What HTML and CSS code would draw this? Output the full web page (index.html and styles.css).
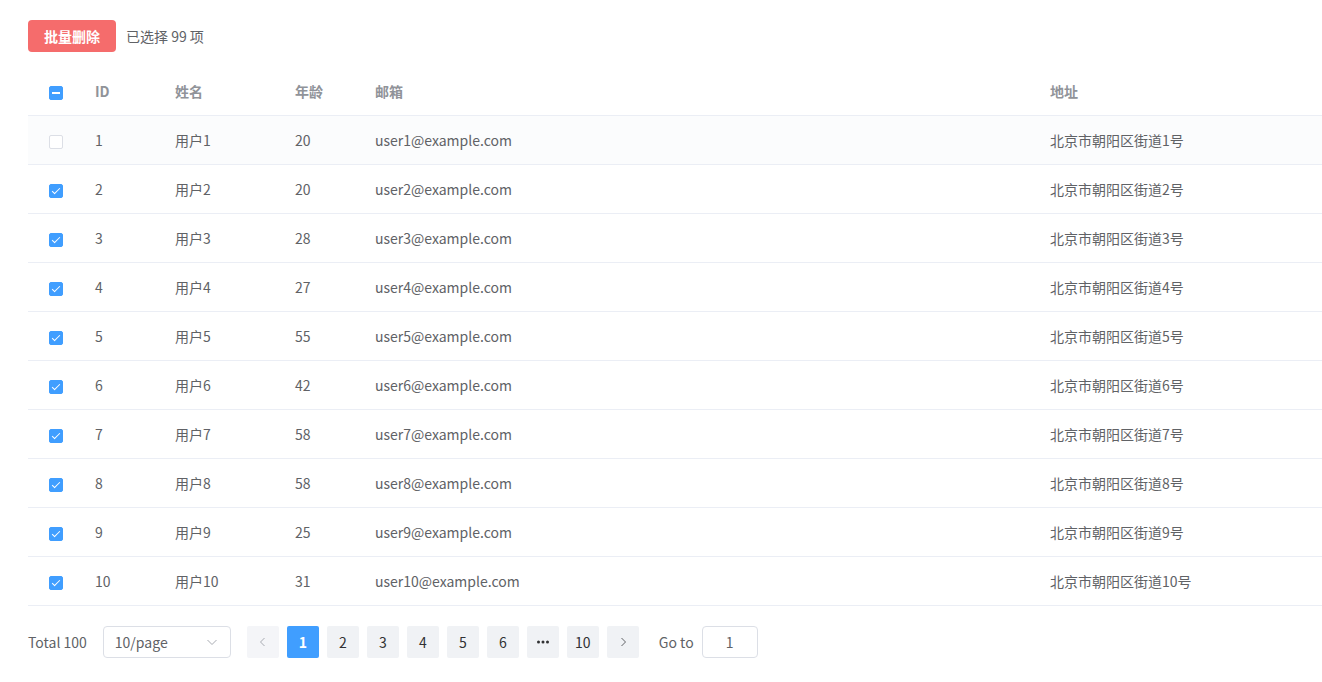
FILE: index.html
```html
<!DOCTYPE html>
<html lang="zh-CN">
<head>
    <meta charset="UTF-8">
    <meta name="viewport" content="width=device-width, initial-scale=1.0">
    <title>用户列表</title>
    <link rel="stylesheet" href="styles.css">
</head>
<body>

<div class="page">
    <div class="toolbar">
        <button class="btn-danger">批量删除</button>
        <span class="selected-info">已选择 99 项</span>
    </div>

    <table class="user-table">
        <colgroup>
            <col class="col-check">
            <col class="col-id">
            <col class="col-name">
            <col class="col-age">
            <col class="col-email">
            <col class="col-addr">
        </colgroup>
        <thead>
        <tr>
            <th class="cell-check"><span class="checkbox indeterminate"></span></th>
            <th>ID</th>
            <th>姓名</th>
            <th>年龄</th>
            <th>邮箱</th>
            <th>地址</th>
        </tr>
        </thead>
        <tbody>
        <tr class="hover">
            <td class="cell-check"><span class="checkbox"></span></td>
            <td>1</td><td>用户1</td><td>20</td><td>user1@example.com</td><td>北京市朝阳区街道1号</td>
        </tr>
        <tr>
            <td class="cell-check"><span class="checkbox checked"></span></td>
            <td>2</td><td>用户2</td><td>20</td><td>user2@example.com</td><td>北京市朝阳区街道2号</td>
        </tr>
        <tr>
            <td class="cell-check"><span class="checkbox checked"></span></td>
            <td>3</td><td>用户3</td><td>28</td><td>user3@example.com</td><td>北京市朝阳区街道3号</td>
        </tr>
        <tr>
            <td class="cell-check"><span class="checkbox checked"></span></td>
            <td>4</td><td>用户4</td><td>27</td><td>user4@example.com</td><td>北京市朝阳区街道4号</td>
        </tr>
        <tr>
            <td class="cell-check"><span class="checkbox checked"></span></td>
            <td>5</td><td>用户5</td><td>55</td><td>user5@example.com</td><td>北京市朝阳区街道5号</td>
        </tr>
        <tr>
            <td class="cell-check"><span class="checkbox checked"></span></td>
            <td>6</td><td>用户6</td><td>42</td><td>user6@example.com</td><td>北京市朝阳区街道6号</td>
        </tr>
        <tr>
            <td class="cell-check"><span class="checkbox checked"></span></td>
            <td>7</td><td>用户7</td><td>58</td><td>user7@example.com</td><td>北京市朝阳区街道7号</td>
        </tr>
        <tr>
            <td class="cell-check"><span class="checkbox checked"></span></td>
            <td>8</td><td>用户8</td><td>58</td><td>user8@example.com</td><td>北京市朝阳区街道8号</td>
        </tr>
        <tr>
            <td class="cell-check"><span class="checkbox checked"></span></td>
            <td>9</td><td>用户9</td><td>25</td><td>user9@example.com</td><td>北京市朝阳区街道9号</td>
        </tr>
        <tr>
            <td class="cell-check"><span class="checkbox checked"></span></td>
            <td>10</td><td>用户10</td><td>31</td><td>user10@example.com</td><td>北京市朝阳区街道10号</td>
        </tr>
        </tbody>
    </table>

    <div class="pagination">
        <span class="total">Total 100</span>
        <div class="size-select">
            <span>10/page</span>
            <svg class="chevron" width="14" height="14" viewBox="0 0 14 14">
                <path d="M2.5 5l4.5 4.5 4.5-4.5" fill="none" stroke="#a8abb2" stroke-width="1"/>
            </svg>
        </div>
        <div class="pager">
            <button class="page-btn disabled">
                <svg width="14" height="14" viewBox="0 0 14 14">
                    <path d="M8.5 3L4.5 7l4 4" fill="none" stroke="#a8abb2" stroke-width="1"/>
                </svg>
            </button>
            <button class="page-btn active">1</button>
            <button class="page-btn">2</button>
            <button class="page-btn">3</button>
            <button class="page-btn">4</button>
            <button class="page-btn">5</button>
            <button class="page-btn">6</button>
            <button class="page-btn more">
                <svg width="14" height="4" viewBox="0 0 14 4">
                    <circle cx="2.5" cy="2" r="1.5" fill="#303133"/>
                    <circle cx="7" cy="2" r="1.5" fill="#303133"/>
                    <circle cx="11.5" cy="2" r="1.5" fill="#303133"/>
                </svg>
            </button>
            <button class="page-btn">10</button>
            <button class="page-btn">
                <svg width="14" height="14" viewBox="0 0 14 14">
                    <path d="M5.5 3l4 4-4 4" fill="none" stroke="#606266" stroke-width="1"/>
                </svg>
            </button>
        </div>
        <span class="goto">Go to</span>
        <div class="goto-input">1</div>
    </div>
</div>

</body>
</html>
```

FILE: styles.css
```css
body {
    margin: 0;
    background: #ffffff;
    font-family: "Noto Sans CJK SC", "Noto Sans", sans-serif;
    font-size: 14px;
    color: #606266;
}

.page {
    padding: 20px 0 0 28px;
}

.toolbar {
    display: flex;
    align-items: center;
    height: 32px;
    margin-bottom: 15px;
}

.btn-danger {
    height: 32px;
    padding: 0 16px;
    border: none;
    border-radius: 4px;
    background: #f56c6c;
    color: #ffffff;
    font-family: inherit;
    font-size: 14px;
    font-weight: bold;
    cursor: pointer;
}

.selected-info {
    margin-left: 10px;
    color: #606266;
}

.user-table {
    width: 100%;
    border-collapse: collapse;
    table-layout: fixed;
}

.col-check { width: 55px; }
.col-id { width: 80px; }
.col-name { width: 120px; }
.col-age { width: 80px; }
.col-email { width: 675px; }

.user-table th,
.user-table td {
    height: 48px;
    padding: 0 12px;
    text-align: left;
    border-bottom: 1px solid #ebeef5;
    line-height: 23px;
    white-space: nowrap;
}

.user-table th {
    color: #909399;
    font-weight: bold;
}

.user-table td {
    color: #606266;
}

.user-table tr.hover td {
    background: #fbfcfd;
}

.user-table .cell-check {
    padding: 0;
    text-align: center;
}

.checkbox {
    display: inline-block;
    box-sizing: border-box;
    width: 14px;
    height: 14px;
    border: 1px solid #dcdfe6;
    border-radius: 2px;
    background: #ffffff;
    vertical-align: middle;
    position: relative;
}

.checkbox.checked,
.checkbox.indeterminate {
    background: #409eff;
    border-color: #409eff;
}

.checkbox.checked::after {
    content: "";
    position: absolute;
    left: 4px;
    top: 1px;
    width: 3px;
    height: 7px;
    border: 1px solid #ffffff;
    border-left: 0;
    border-top: 0;
    transform: rotate(45deg);
}

.checkbox.indeterminate::after {
    content: "";
    position: absolute;
    left: 2px;
    right: 2px;
    top: 5px;
    height: 2px;
    background: #ffffff;
}

.pagination {
    display: flex;
    align-items: center;
    height: 32px;
    margin-top: 20px;
}

.total {
    margin-right: 16px;
}

.size-select {
    box-sizing: border-box;
    width: 128px;
    height: 32px;
    padding: 0 11px;
    border: 1px solid #dcdfe6;
    border-radius: 4px;
    display: flex;
    align-items: center;
    justify-content: space-between;
    color: #606266;
}

.pager {
    display: flex;
    gap: 8px;
    margin-left: 16px;
}

.page-btn {
    width: 32px;
    height: 32px;
    padding: 0;
    border: none;
    border-radius: 2px;
    background: #f0f2f5;
    color: #303133;
    font-family: inherit;
    font-size: 14px;
    display: flex;
    align-items: center;
    justify-content: center;
    cursor: pointer;
}

.page-btn.active {
    background: #409eff;
    color: #ffffff;
    font-weight: bold;
}

.page-btn.disabled {
    background: #f4f5f8;
    cursor: not-allowed;
}

.goto {
    margin-left: 20px;
    margin-right: 8px;
}

.goto-input {
    box-sizing: border-box;
    width: 56px;
    height: 32px;
    border: 1px solid #dcdfe6;
    border-radius: 4px;
    display: flex;
    align-items: center;
    justify-content: center;
    color: #606266;
}
```
